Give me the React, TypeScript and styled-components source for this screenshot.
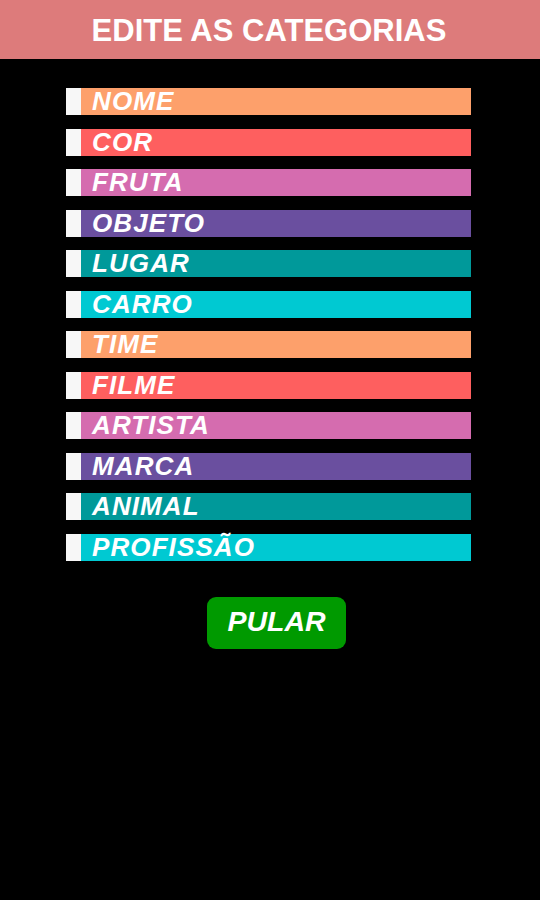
import React from "react";
import styled, { createGlobalStyle } from "styled-components";

const GlobalStyle = createGlobalStyle`
  html, body { margin: 0; padding: 0; background: #000; }
  body { font-family: "Liberation Sans", Arial, sans-serif; }
`;

const Page = styled.div`
  width: 540px;
  height: 900px;
  background: #000;
  display: flex;
  flex-direction: column;
`;

const Header = styled.header`
  height: 59px;
  background: #dd7b7b;
  display: flex;
  align-items: center;
  justify-content: center;
`;

const Title = styled.h1`
  margin: 0;
  padding-right: 2px;
  color: #fff;
  font-family: "Liberation Sans", Arial, sans-serif;
  font-weight: bold;
  font-size: 31px;
  line-height: 1;
  padding-top: 1px;
`;

const List = styled.ul`
  list-style: none;
  margin: 29px 0 0 66px;
  padding: 0;
  width: 405px;
  display: flex;
  flex-direction: column;
  gap: 13.5px;
`;

const Row = styled.li`
  height: 27px;
  display: flex;
`;

const Handle = styled.span`
  width: 15px;
  background: #f7f7f7;
`;

const Bar = styled.span<{ $color: string }>`
  flex: 1;
  background: ${(p) => p.$color};
  display: flex;
  align-items: center;
  padding-left: 11px;
  padding-bottom: 1px;
  color: #fff;
  font-family: "Liberation Sans", Arial, sans-serif;
  font-weight: bold;
  font-style: italic;
  font-size: 26px;
  letter-spacing: 1.1px;
  line-height: 1;
`;

const ButtonWrap = styled.div`
  display: flex;
  justify-content: center;
  padding-left: 13px;
  margin-top: 36px;
`;

const Button = styled.button`
  width: 139px;
  height: 52px;
  border: none;
  border-radius: 9px;
  background: #009a00;
  color: #fff;
  font-family: "Liberation Sans", Arial, sans-serif;
  font-weight: bold;
  font-style: italic;
  font-size: 28.5px;
  display: flex;
  align-items: center;
  justify-content: center;
  padding: 0 0 2px 0;
`;

const colors = ["#fda06b", "#fe5f5f", "#d56caf", "#6a4f9f", "#00999a", "#00c9d2"];

const categories = [
  "NOME",
  "COR",
  "FRUTA",
  "OBJETO",
  "LUGAR",
  "CARRO",
  "TIME",
  "FILME",
  "ARTISTA",
  "MARCA",
  "ANIMAL",
  "PROFISSÃO",
];

export default function App() {
  return (
    <Page>
      <GlobalStyle />
      <Header>
        <Title>EDITE AS CATEGORIAS</Title>
      </Header>
      <List>
        {categories.map((c, i) => (
          <Row key={c}>
            <Handle />
            <Bar $color={colors[i % colors.length]}>{c}</Bar>
          </Row>
        ))}
      </List>
      <ButtonWrap>
        <Button>PULAR</Button>
      </ButtonWrap>
    </Page>
  );
}
